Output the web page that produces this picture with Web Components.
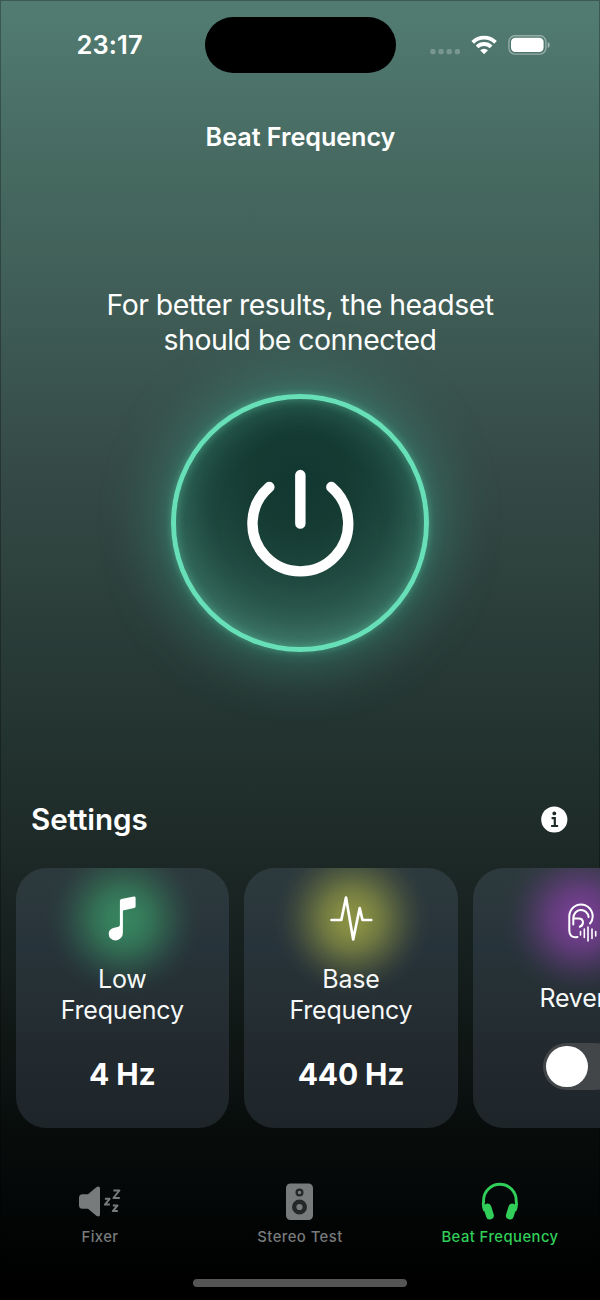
<!DOCTYPE html>
<html lang="en">
<head>
<meta charset="utf-8">
<title>Beat Frequency</title>
<style>
html,body{margin:0;background:#000}
body{width:600px;height:1300px;overflow:hidden;font-family:Inter,"Liberation Sans",sans-serif;font-variant-ligatures:none;color:#fff}
</style>
</head>
<body>
<beat-screen></beat-screen>
<script>
function define(name, html) {
  const template = document.createElement('template');
  template.innerHTML = html;
  customElements.define(name, class extends HTMLElement {
    constructor() {
      super();
      this.attachShadow({mode: 'open'}).append(template.content.cloneNode(true));
    }
  });
}

define('status-bar', `
<style>
:host{display:grid;grid-template-columns:204.500px 191px 1fr;height:73.500px;padding-top:17.300px;box-sizing:border-box}
.time{padding-left:76.500px;font-size:25.500px;line-height:56px;font-weight:600;letter-spacing:.1px;white-space:nowrap}
.island{background:#000;border-radius:28px;height:56px}
svg{display:block;width:204px;height:56px}
</style>
<div class="time">23:17</div>
<div class="island"></div>
<svg viewBox="396 17 204 56" fill="#fff">
  <g opacity=".24"><rect x="430.3" y="49" width="5.2" height="5.2" rx="1.7"/><rect x="438.5" y="49" width="5.2" height="5.2" rx="1.7"/><rect x="446.6" y="49" width="5.2" height="5.2" rx="1.7"/><rect x="454.8" y="49" width="5.2" height="5.2" rx="1.7"/></g>
  <g fill="none" stroke="#fff" stroke-width="3.9"><path d="M472.700 42.300a16.300 16.300 0 0 1 22.800 0"/><path d="M477.100 46.900a10 10 0 0 1 14 0"/></g>
  <path d="M484.100 54.200l-3.900-3.900a5.500 5.500 0 0 1 7.800 0z"/>
  <rect x="508.9" y="35.7" width="37" height="18.4" rx="6" fill="none" stroke="#fff" stroke-opacity=".4" stroke-width="1.4"/>
  <rect x="511" y="37.8" width="32.6" height="14.2" rx="4.2"/>
  <path opacity=".45" d="M547.7 41.9v6c1.3-.5 2.1-1.7 2.1-3s-.8-2.500-2.100-3z"/>
</svg>`);

define('power-button', `
<style>
:host{display:block;width:258.200px;height:258.200px;position:relative;border-radius:50%;box-sizing:border-box;border:5.500px solid #67dfb7;
background:radial-gradient(circle at 50% 33%,#113830 0,#153b33 24%,#1e473e 46%,#2f5d51 68%,#47806f 88%);
box-shadow:0 0 6px rgba(90,210,170,.4),0 0 18px rgba(72,180,145,.32),0 0 54px 16px rgba(62,155,132,.46),inset 0 0 9px rgba(90,200,160,.5),inset 0 0 36px rgba(60,135,115,.6)}
svg{display:block;width:100%;height:100%}
</style>
<svg viewBox="176.700 399.700 247.300 247.300" fill="none" stroke="#fff" stroke-width="10.400" stroke-linecap="round"><path d="M300.600 475.500V523.700M269.700 487.400a47.700 47.700 0 1 0 61.800 0"/></svg>`);

define('info-button', `
<style>:host{display:block;width:27px;height:27px}svg{display:block}</style>
<svg width="27" height="27" viewBox="0 0 27 27"><circle cx="13.300" cy="13.500" r="13.100" fill="#fff"/><circle cx="13.300" cy="7.400" r="1.900" fill="#1e2b28"/><path d="M10.600 12.100h3.200v7.700M10.100 20h7" fill="none" stroke="#1e2b28" stroke-width="2.200"/></svg>`);

define('setting-card', `
<style>
:host{display:flex;flex:none;flex-direction:column;align-items:center;width:213.500px;height:260.300px;border-radius:31px;overflow:hidden;box-sizing:border-box;
background:radial-gradient(circle 78px at 50.500% 51px,var(--glow) 0,color-mix(in srgb,var(--glow) 90%,transparent) 20%,color-mix(in srgb,var(--glow) 70%,transparent) 38%,color-mix(in srgb,var(--glow) 42%,transparent) 56%,color-mix(in srgb,var(--glow) 18%,transparent) 74%,color-mix(in srgb,var(--glow) 5%,transparent) 88%,transparent 100%),linear-gradient(#2d3a3d,#27333a 31%,#263136 43%,#222a2f 70%,#1e2529)}
.icon{width:60px;height:50px;margin-top:26px}
::slotted(svg){display:block}
.label{height:61.500px;margin-top:19.800px;display:flex;align-items:center;text-align:center;font-size:25px;line-height:30.700px;font-weight:400;letter-spacing:-.2px;color:#f7f9f9}
.value{margin-top:29.500px;height:38px;display:flex;align-items:center;font-size:30px;line-height:38px;font-weight:700;letter-spacing:-.15px}
:host([toggle]) .label{margin:24px 0 -4px 1.500px}
:host([toggle]) .value{margin:17px 0 0 3px;height:48px}
</style>
<div class="icon"><slot name="icon"></slot></div>
<div class="label"><slot></slot></div>
<div class="value"><slot name="value"></slot></div>`);

define('toggle-switch', `
<style>
:host{display:block;width:76px;height:47.500px;box-sizing:border-box;padding:3px;border-radius:24px;background:#424649}
i{display:block;width:41.500px;height:41.500px;border-radius:50%;background:#fff}
</style><i></i>`);

define('tab-item', `
<style>
:host{display:flex;flex-direction:column;align-items:center;color:#787b7b;width:200px}
:host([active]){color:#31cf59}
::slotted(svg){display:block;height:44px}
.t{font-size:14.800px;line-height:20px;font-weight:500;letter-spacing:.45px;margin-top:3px;white-space:nowrap}
</style>
<slot name="icon"></slot><div class="t"><slot></slot></div>`);

define('beat-screen', `
<style>
:host{display:flex;flex-direction:column;width:600px;height:1300px;overflow:hidden;box-sizing:border-box;
box-shadow:inset 0 0 0 1px rgba(0,0,0,.28);
background:linear-gradient(#527c72 0,#466960 170px,#3f5d56 300px,#364c48 450px,#2c3f3b 600px,#233330 740px,#1c2826 865px,#121b19 1000px,#080d0c 1130px,#040707 1200px,#000 1280px)}
.title{margin-top:47.500px;text-align:center;font-size:25.200px;line-height:32px;font-weight:600;letter-spacing:-.05px;padding-left:1px}
.hint{margin-top:135px;text-align:center;font-size:28.400px;line-height:34.500px;font-weight:400;letter-spacing:-.5px}
power-button{align-self:center;margin:37px 0 0 .5px}
.head{display:flex;align-items:center;justify-content:space-between;margin-top:147.300px;height:40px;padding:0 32.500px 0 31px;font-size:29.600px;font-weight:600;letter-spacing:-.1px}
.head span{margin-top:-.6px}
.cards{display:flex;gap:15.200px;margin-top:28.600px;padding-left:15.500px}
.tabs{display:flex;margin:51.600px 0 0 0}
tab-item{margin-right:0}
.home{width:214px;height:7.500px;border-radius:4px;background:#555;margin:32.500px auto 0;flex:none}
</style>
<status-bar></status-bar>
<div class="title">Beat Frequency</div>
<div class="hint">For better results, the headset<br>should be connected</div>
<power-button></power-button>
<div class="head"><span>Settings</span><info-button></info-button></div>
<div class="cards">
  <setting-card style="--glow:#37865f">
    <svg slot="icon" width="60" height="50" viewBox="92.300 894 60 50" fill="#fff"><path d="M120.200 900.800q0-1.500 1.500-1.900l12.500-2.300q1.700-.2 1.700 1.300v8.300q0 1.500-1.500 1.900l-11.200 2.300v22.100a7.200 7.900 0 0 1-7.200 7.900a6.900 6.400 0 0 1-7-6.500q0-4.500 4.500-5.900l5.300-1.200q1.400-.4 1.400-2z"/></svg>
    Low<br>Frequency<span slot="value">4 Hz</span>
  </setting-card>
  <setting-card style="--glow:#8c9344">
    <svg slot="icon" width="60" height="50" viewBox="321 894 60 50" fill="none" stroke="#fff" stroke-width="2.700" stroke-linecap="round" stroke-linejoin="round"><path d="M331.500 920h9.800L346 897.500l7.200 42L359.700 908l2.800 12h8.700"/></svg>
    Base<br>Frequency<span slot="value">440 Hz</span>
  </setting-card>
  <setting-card toggle style="--glow:#783f94">
    <svg slot="icon" width="60" height="50" viewBox="550 894 60 50" fill="none" stroke="#fff" stroke-width="2" stroke-linecap="round"><path d="M577.500 937q-8.200 1.200-8.200-6.500V916.500a11.700 12 0 0 1 23.400 0q0 4-2.700 7M573.300 924.500v-6.500a7.700 8.300 0 0 1 15.300-1M573.500 918.500h5.300q3.700 0 4.200 3.500q0 3.700-3.200 4.800"/><path stroke-width="1.600" d="M580.500 931.500v3.500M584.300 929v8.500M588 927v14M592 929v9.500M595.700 931.500v4.500"/></svg>
    Reverb<toggle-switch slot="value"></toggle-switch>
  </setting-card>
</div>
<div class="tabs">
  <tab-item>
    <svg slot="icon" width="46" height="44" viewBox="77 1180 46 44" fill="currentColor"><path d="M82.500 1194.200h5.500l8.300-7q3.700-2.200 3.700 1.500v25.500q0 3.700-3.700 1.500l-8.300-7h-5.500q-3.500 0-3.500-3.500v-7.500q0-3.500 3.500-3.500z"/><path d="M113.400 1190.500h6l-6 7.500h6.400M104.900 1198.800h4.700l-4.700 5.800h5M112.800 1205.500h4.700l-4.700 5.600h5" fill="none" stroke="currentColor" stroke-width="2" stroke-linejoin="round" stroke-linecap="butt"/></svg>
    Fixer
  </tab-item>
  <tab-item>
    <svg slot="icon" width="46" height="44" viewBox="277 1180 46 44"><rect x="286" y="1183.500" width="27" height="36.500" rx="4.500" fill="currentColor"/><circle cx="299.500" cy="1192.500" r="2.900" fill="none" stroke="#242828" stroke-width="2.300"/><circle cx="299.500" cy="1207" r="5.300" fill="none" stroke="#242828" stroke-width="4.400"/></svg>
    Stereo Test
  </tab-item>
  <tab-item active>
    <svg slot="icon" width="46" height="44" viewBox="476.600 1180 46 44"><path d="M484.500 1211Q482.200 1206 483.200 1201.500V1200.500a16.300 16.300 0 0 1 32.600 0V1201.500Q516.800 1206 514.500 1211" fill="none" stroke="currentColor" stroke-width="2.900"/><path d="M487 1207.500l2.500 8M512 1207.500l-2.500 8" stroke="currentColor" stroke-width="7.900" stroke-linecap="round"/></svg>
    Beat Frequency
  </tab-item>
</div>
<div class="home"></div>`);
</script>
</body>
</html>
